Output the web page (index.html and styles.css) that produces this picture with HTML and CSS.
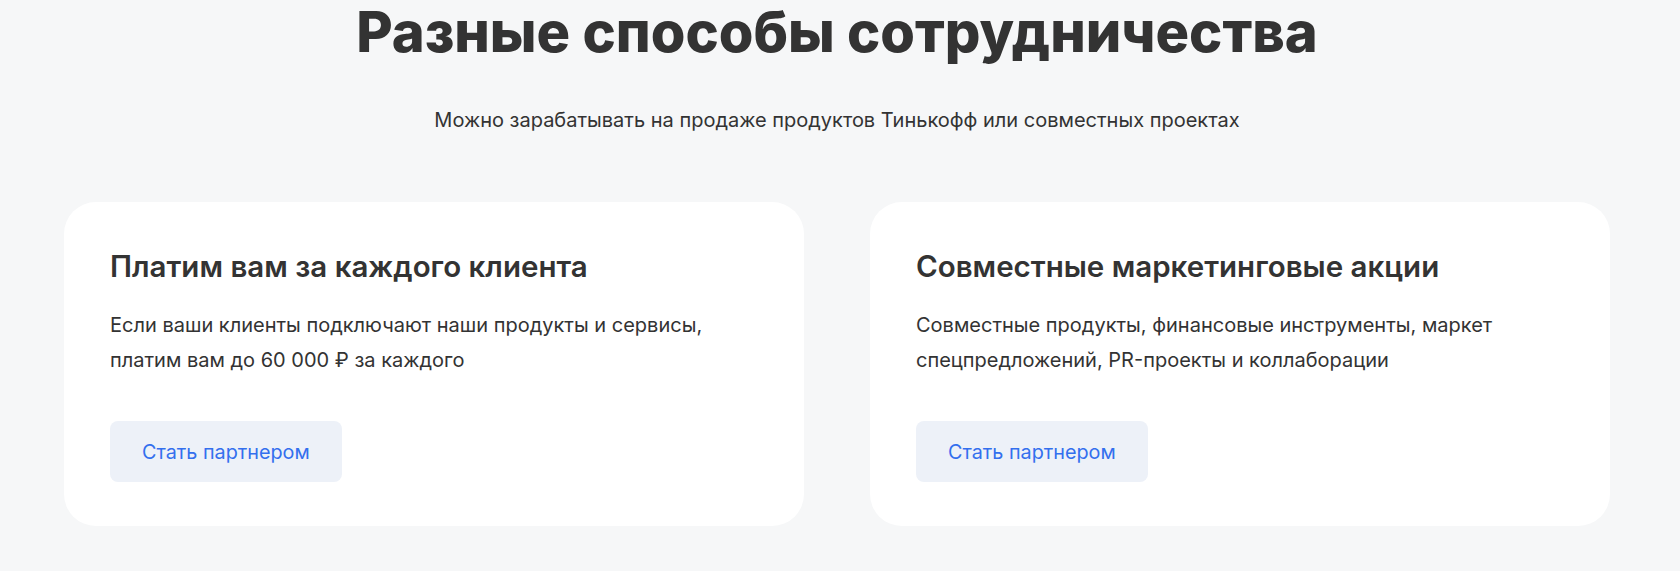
FILE: index.html
```html
<!DOCTYPE html>
<html lang="ru">
<head>
<meta charset="utf-8">
<title>Разные способы сотрудничества</title>
<link rel="stylesheet" href="styles.css">
</head>
<body>
<section class="partners">
  <h1 class="partners__title">Разные способы сотрудничества</h1>
  <p class="partners__subtitle">Можно зарабатывать на продаже продуктов Тинькофф или совместных проектах</p>
  <div class="partners__grid">
    <article class="card">
      <h2 class="card__title">Платим вам за каждого клиента</h2>
      <p class="card__text">Если ваши клиенты подключают наши продукты и сервисы, платим вам до 60&nbsp;000&nbsp;₽ за каждого</p>
      <button class="card__button" type="button">Стать партнером</button>
    </article>
    <article class="card">
      <h2 class="card__title">Совместные маркетинговые акции</h2>
      <p class="card__text">Совместные продукты, финансовые инструменты, маркет спецпредложений, PR-проекты и коллаборации</p>
      <button class="card__button" type="button">Стать партнером</button>
    </article>
  </div>
</section>
</body>
</html>
```
FILE: styles.css
```css
* { box-sizing: border-box; }

html, body {
  margin: 0;
  padding: 0;
  background: #f6f7f8;
}

body {
  font-family: Inter, "Noto Sans", "Liberation Sans", sans-serif;
  color: #333333;
  height: 571px;
  overflow: hidden;
}

.partners {
  display: flex;
  flex-direction: column;
  align-items: center;
  padding: 0 70px 0 64px;
}

.partners__title {
  margin: 0;
  font-size: 56px;
  line-height: 65px;
  font-weight: 800;
  letter-spacing: 0;
  color: #333333;
  text-align: center;
}

.partners__subtitle {
  margin: 41px 0 0;
  font-size: 20px;
  line-height: 28px;
  font-weight: 400;
  color: #333333;
  text-align: center;
}

.partners__grid {
  margin-top: 68px;
  display: grid;
  grid-template-columns: 740px 740px;
  gap: 66px;
}

.card {
  background: #ffffff;
  border-radius: 32px;
  padding: 46px 46px 44px;
  height: 324px;
  display: flex;
  flex-direction: column;
  align-items: flex-start;
}

.card__title {
  margin: 0;
  font-size: 29.5px;
  line-height: 36px;
  font-weight: 600;
  color: #333333;
}

.card__text {
  margin: 24px 0 0;
  max-width: 620px;
  font-size: 20px;
  line-height: 35px;
  font-weight: 400;
  color: #333333;
}

.card__button {
  margin-top: auto;
  height: 61px;
  padding: 0 32px;
  border: 0;
  border-radius: 8px;
  background: #edf1f8;
  color: #336fee;
  font-family: inherit;
  font-size: 19.8px;
  font-weight: 400;
  cursor: pointer;
}
```
